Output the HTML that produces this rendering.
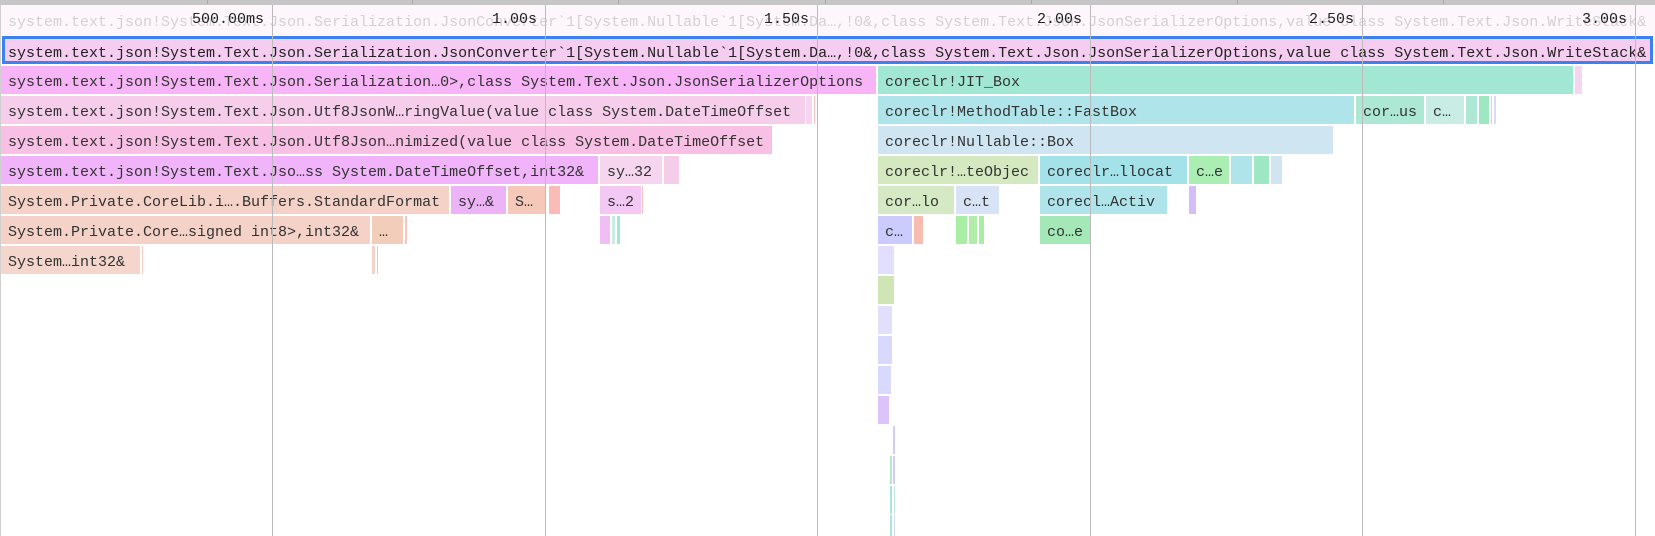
<!DOCTYPE html>
<html><head><meta charset="utf-8"><style>
html,body{margin:0;padding:0;background:#fff}
#c{position:relative;width:1655px;height:536px;overflow:hidden;background:#fff;font:15px/33px "Liberation Mono","DejaVu Sans Mono",monospace;color:#333}
.b{position:absolute;height:28px;white-space:pre;overflow:hidden;text-indent:7px;box-sizing:border-box}
.g{position:absolute;top:5px;width:1px;height:531px;background:#bbb}
.t{position:absolute;top:6px;height:28px;line-height:28px;color:#222;text-align:right;width:90px}
.k{position:absolute;top:0;width:1px;height:4px;background:#aaa}
</style></head><body><div id="c">
<div style="position:absolute;left:0;top:0;width:1655px;height:5px;background:#c6c6c6"></div>
<div class="k" style="left:207px"></div><div class="k" style="left:412px"></div><div class="k" style="left:618px"></div><div class="k" style="left:825px"></div><div class="k" style="left:1031px"></div><div class="k" style="left:1237px"></div><div class="k" style="left:1443px"></div>
<div style="position:absolute;left:0;top:5px;width:1px;height:531px;background:#d0d0d0"></div>

<div class="b" style="left:1px;top:5px;width:1654px;height:30px;line-height:36px;background:#fdf7fc;color:#d3d0d3">system.text.json!System.Text.Json.Serialization.JsonConverter`1[System.Nullable`1[System.Da…,!0&amp;,class System.Text.Json.JsonSerializerOptions,value class System.Text.Json.WriteStack&amp;</div>
<div class="b" style="left:2px;top:36px;width:1651px;height:28px;line-height:29px;background:#f5cdf1;border:3px solid #3b82f0;text-indent:3px;color:#222">system.text.json!System.Text.Json.Serialization.JsonConverter`1[System.Nullable`1[System.Da…,!0&amp;,class System.Text.Json.JsonSerializerOptions,value class System.Text.Json.WriteStack&amp;</div>

<div class="b" style="left:1px;top:66px;width:875px;background:#f7b4f6">system.text.json!System.Text.Json.Serialization…0&gt;,class System.Text.Json.JsonSerializerOptions</div>
<div class="b" style="left:878px;top:66px;width:695px;background:#a2e7d3">coreclr!JIT_Box</div>
<div class="b" style="left:1575px;top:66px;width:7px;background:#f5d5f0"></div>

<div class="b" style="left:1px;top:96px;width:804px;background:#f6cdea">system.text.json!System.Text.Json.Utf8JsonW…ringValue(value class System.DateTimeOffset</div>
<div class="b" style="left:806px;top:96px;width:6px;background:#f5d5f0"></div>
<div class="b" style="left:814px;top:96px;width:1px;background:#f9c4c0"></div>
<div class="b" style="left:878px;top:96px;width:476px;background:#afe4ea">coreclr!MethodTable::FastBox</div>
<div class="b" style="left:1356px;top:96px;width:68px;background:#ace8d4">cor…us</div>
<div class="b" style="left:1426px;top:96px;width:38px;background:#c9ece4">c…</div>
<div class="b" style="left:1466px;top:96px;width:11px;background:#ace8d4"></div>
<div class="b" style="left:1479px;top:96px;width:10px;background:#9de8c2"></div>
<div class="b" style="left:1491px;top:96px;width:1px;background:#afe4ea"></div>
<div class="b" style="left:1494px;top:96px;width:2px;background:#dcd8f8"></div>

<div class="b" style="left:1px;top:126px;width:771px;background:#f9c0e5">system.text.json!System.Text.Json.Utf8Json…nimized(value class System.DateTimeOffset</div>
<div class="b" style="left:878px;top:126px;width:455px;background:#d0e5f2">coreclr!Nullable::Box</div>

<div class="b" style="left:1px;top:156px;width:597px;background:#f1b3f9">system.text.json!System.Text.Jso…ss System.DateTimeOffset,int32&amp;</div>
<div class="b" style="left:600px;top:156px;width:62px;background:#f5d6ee">sy…32</div>
<div class="b" style="left:664px;top:156px;width:15px;background:#f5cde9"></div>
<div class="b" style="left:878px;top:156px;width:160px;background:#d5e9c0">coreclr!…teObjec</div>
<div class="b" style="left:1040px;top:156px;width:147px;background:#a2e2e8">coreclr…llocat</div>
<div class="b" style="left:1189px;top:156px;width:40px;background:#abeeb4">c…e</div>
<div class="b" style="left:1231px;top:156px;width:21px;background:#afe4ea"></div>
<div class="b" style="left:1254px;top:156px;width:15px;background:#9de8c2"></div>
<div class="b" style="left:1271px;top:156px;width:11px;background:#d0e5f2"></div>

<div class="b" style="left:1px;top:186px;width:448px;background:#f4d2c8">System.Private.CoreLib.i….Buffers.StandardFormat</div>
<div class="b" style="left:451px;top:186px;width:55px;background:#ecb4f7">sy…&amp;</div>
<div class="b" style="left:508px;top:186px;width:37px;background:#f5c8ba">S…</div>
<div class="b" style="left:549px;top:186px;width:11px;background:#fbbcb8"></div>
<div class="b" style="left:600px;top:186px;width:41px;background:#f3c8f4">s…2</div>
<div class="b" style="left:642px;top:186px;width:1px;background:#f9c4c0"></div>
<div class="b" style="left:878px;top:186px;width:76px;background:#d5e9c4">cor…lo</div>
<div class="b" style="left:956px;top:186px;width:43px;background:#d8e4f5">c…t</div>
<div class="b" style="left:1040px;top:186px;width:127px;background:#afe4ea">corecl…Activ</div>
<div class="b" style="left:1189px;top:186px;width:7px;background:#d4bdf9"></div>

<div class="b" style="left:1px;top:216px;width:369px;background:#f4d2c8">System.Private.Core…signed int8&gt;,int32&amp;</div>
<div class="b" style="left:372px;top:216px;width:31px;background:#f2cdba">…</div>
<div class="b" style="left:405px;top:216px;width:2px;background:#fbc4bc"></div>
<div class="b" style="left:600px;top:216px;width:10px;background:#f0bdf6"></div>
<div class="b" style="left:612px;top:216px;width:3px;background:#c9ece4"></div>
<div class="b" style="left:617px;top:216px;width:3px;background:#a2e7d3"></div>
<div class="b" style="left:878px;top:216px;width:34px;background:#cccbfd">c…</div>
<div class="b" style="left:914px;top:216px;width:9px;background:#f9bcb0"></div>
<div class="b" style="left:956px;top:216px;width:11px;background:#a8eea4"></div>
<div class="b" style="left:969px;top:216px;width:8px;background:#b2ecab"></div>
<div class="b" style="left:979px;top:216px;width:5px;background:#a8eea4"></div>
<div class="b" style="left:1040px;top:216px;width:50px;background:#a4e8b8">co…e</div>

<div class="b" style="left:1px;top:246px;width:139px;background:#f4d6cc">System…int32&amp;</div>
<div class="b" style="left:142px;top:246px;width:1px;background:#f9cdc4"></div>
<div class="b" style="left:372px;top:246px;width:3px;background:#f4d2c8"></div>
<div class="b" style="left:377px;top:246px;width:1px;background:#f9c4c0"></div>
<div class="b" style="left:878px;top:246px;width:16px;background:#e1dffd"></div>

<div class="b" style="left:878px;top:276px;width:16px;background:#cfe5b4"></div>
<div class="b" style="left:878px;top:306px;width:14px;background:#e2dffc"></div>
<div class="b" style="left:878px;top:336px;width:14px;background:#d8d9fd"></div>
<div class="b" style="left:878px;top:366px;width:13px;background:#d8d9fd"></div>
<div class="b" style="left:878px;top:396px;width:11px;background:#dcc4fb"></div>
<div class="b" style="left:893px;top:426px;width:2px;background:#d0ccf8"></div>
<div class="b" style="left:890px;top:456px;width:2px;background:#b5e8d0"></div>
<div class="b" style="left:893px;top:456px;width:2px;background:#d0ccf8"></div>
<div class="b" style="left:890px;top:486px;width:2px;background:#a8e8e0"></div>
<div class="b" style="left:894px;top:486px;width:1px;background:#c0eadc"></div>
<div class="b" style="left:890px;top:515px;width:2px;background:#a8e8e0;height:21px"></div>
<div class="b" style="left:894px;top:515px;width:1px;background:#d0dcfa;height:21px"></div>

<div class="g" style="left:272px"></div>
<div class="g" style="left:545px"></div>
<div class="g" style="left:817px"></div>
<div class="g" style="left:1090px"></div>
<div class="g" style="left:1362px"></div>
<div class="g" style="left:1635px"></div>
<div class="t" style="left:174px">500.00ms</div>
<div class="t" style="left:447px">1.00s</div>
<div class="t" style="left:719px">1.50s</div>
<div class="t" style="left:992px">2.00s</div>
<div class="t" style="left:1264px">2.50s</div>
<div class="t" style="left:1537px">3.00s</div>
</div></body></html>
